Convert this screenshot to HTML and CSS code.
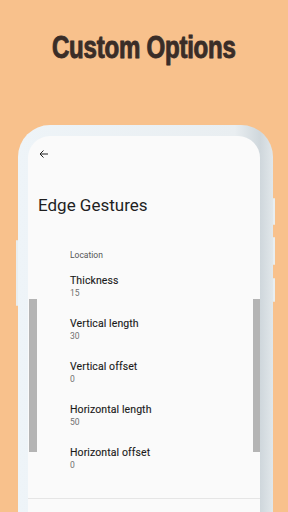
FILE: index.html
```html
<!DOCTYPE html>
<html lang="en">
<head>
  <meta charset="UTF-8">
  <meta name="viewport" content="width=device-width, initial-scale=1.0">
  <title>Custom Options</title>
  <link rel="stylesheet" href="styles.css">
</head>
<body>
  <div class="banner">
    <h1>Custom Options</h1>
  </div>
  <div class="phone">
    <span class="btn btn-left"></span>
    <span class="btn btn-r1"></span>
    <span class="btn btn-r2"></span>
    <span class="btn btn-r3"></span>
    <div class="screen">
      <div class="toolbar">
        <svg class="back" width="12" height="12" viewBox="0 0 24 24">
          <path d="M20 12H5M11 5l-7 7 7 7" fill="none" stroke="#222" stroke-width="2"/>
        </svg>
      </div>
      <h2 class="page-title">Edge Gestures</h2>
      <div class="list">
        <div class="section">Location</div>
        <div class="item">
          <div class="label">Thickness</div>
          <div class="value">15</div>
        </div>
        <div class="item">
          <div class="label">Vertical length</div>
          <div class="value">30</div>
        </div>
        <div class="item">
          <div class="label">Vertical offset</div>
          <div class="value">0</div>
        </div>
        <div class="item">
          <div class="label">Horizontal length</div>
          <div class="value">50</div>
        </div>
        <div class="item">
          <div class="label">Horizontal offset</div>
          <div class="value">0</div>
        </div>
      </div>
      <div class="divider"></div>
      <span class="bar bar-left"></span>
      <span class="bar bar-right"></span>
    </div>
  </div>
</body>
</html>
```

FILE: styles.css
```css
* {
  margin: 0;
  padding: 0;
  box-sizing: border-box;
}
body {
  width: 288px;
  height: 512px;
  overflow: hidden;
  background: #f8c18c;
  font-family: Roboto, 'Noto Sans', sans-serif;
}
.banner {
  height: 125px;
  padding-top: 33px;
  text-align: center;
}
.banner h1 {
  display: inline-block;
  font-family: 'Liberation Sans', Arial, sans-serif;
  font-weight: bold;
  font-size: 28px;
  line-height: 30px;
  letter-spacing: -0.3px;
  color: #3a2d27;
  transform: scale(0.86, 1.15);
  -webkit-text-stroke: 0.7px #3a2d27;
  text-shadow: 0 0 1px #8a7a70;
}
.phone {
  position: relative;
  margin: 0 15px 0 18px;
  height: 400px;
  padding: 11px 13px 0 10px;
  border-radius: 32px 32px 0 0;
  background: linear-gradient(to right, #eef4f8 0%, #e9eef1 85%, #cfd7dc 95%, #e1e7ea 100%);
}
.btn {
  position: absolute;
  width: 2px;
  background: #e9eef0;
  border-radius: 1px;
}
.btn-left {
  left: -2px;
  top: 115px;
  height: 66px;
}
.btn-r1 {
  right: -2px;
  top: 73px;
  height: 27px;
}
.btn-r2 {
  right: -2px;
  top: 112px;
  height: 28px;
}
.btn-r3 {
  right: -2px;
  top: 153px;
  height: 24px;
}
.screen {
  position: relative;
  height: 100%;
  background: #fafafa;
  border-radius: 22px 22px 0 0;
}
.toolbar {
  height: 59px;
  padding: 12px 0 0 10px;
}
.back {
  display: block;
}
.page-title {
  font-size: 17px;
  font-weight: normal;
  color: #1f1f1f;
  padding-left: 10px;
  line-height: 20px;
}
.list {
  padding: 34px 0 0 42px;
}
.section {
  font-size: 8.5px;
  color: #555;
  height: 25px;
  line-height: 12px;
}
.item {
  height: 43px;
}
.label {
  font-size: 10.5px;
  color: #1a1a1a;
  line-height: 14px;
  letter-spacing: 0.1px;
  -webkit-text-stroke: 0.12px #1a1a1a;
}
.value {
  font-size: 8.5px;
  color: #6f6f6f;
  line-height: 11px;
}
.divider {
  margin-top: 9px;
  border-top: 1px solid #e5e5e5;
}
.bar {
  position: absolute;
  top: 163px;
  height: 153px;
  background: #b4b4b4;
}
.bar-left {
  left: 1px;
  width: 8px;
}
.bar-right {
  right: 0;
  width: 7px;
}
```
